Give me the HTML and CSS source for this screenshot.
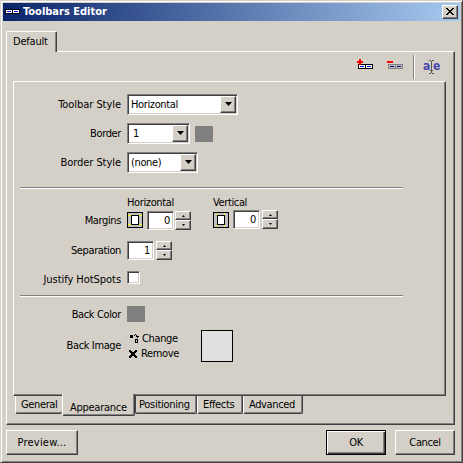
FILE: index.html
```html
<!DOCTYPE html>
<html lang="en">
<head>
<meta charset="utf-8">
<title>Toolbars Editor</title>
<link rel="stylesheet" href="styles.css">
</head>
<body>
<div class="window">
  <header class="titlebar">
    <svg class="app-icon" width="15" height="5" viewBox="0 0 15 5" shape-rendering="crispEdges"><path fill="#000" d="M0 0h15v5H0z"/><path fill="#fff" d="M1 1h6v3H1zM8 1h6v3H8z"/><path fill="#00f" d="M2 2h4v1H2zM9 2h4v1H9z"/></svg>
    <h1>Toolbars Editor</h1>
    <button class="close" aria-label="Close"><svg width="8" height="7" viewBox="0 0 8 7" shape-rendering="crispEdges"><path d="M0 0h2v1H0zM6 0h2v1H6zM1 1h2v1H1zM5 1h2v1H5zM2 2h4v1H2zM3 3h2v1H3zM2 4h4v1H2zM1 5h2v1H1zM5 5h2v1H5zM0 6h2v1H0zM6 6h2v1H6z"/></svg></button>
  </header>
  <nav class="top-tabs"><span class="top-tab">Default</span></nav>
  <main class="page">
    <div class="toolbar">
      <svg width="17" height="12" viewBox="0 0 17 12" shape-rendering="crispEdges"><path fill="#000" d="M2 5h15v5H2z"/><path fill="#fff" d="M3 6h6v3H3zM10 6h6v3h-6z"/><path fill="#00f" d="M4 7h4v1H4zM11 7h4v1h-4z"/><path fill="#f00" d="M3 0h2v2h2v2H5v2H3V4H1V2h2z"/></svg>
      <svg width="17" height="12" viewBox="0 0 17 12" shape-rendering="crispEdges"><path fill="#808080" d="M2 5h15v5H2z"/><path fill="#c0c0c0" d="M3 6h6v3H3zM10 6h6v3h-6z"/><path fill="#000080" d="M4 7h4v1H4zM11 7h4v1h-4z"/><path fill="#f00" d="M1 2h6v2H1z"/></svg>
      <i class="divider"></i>
      <span class="rename"><b>a</b><svg width="5" height="14" viewBox="0 0 5 14" shape-rendering="crispEdges"><path fill="#555" d="M0 0h2v1H0zM3 0h2v1H3zM2 1h1v12H2zM0 13h2v1H0zM3 13h2v1H3zM1 10h3v1H1z"/></svg><b>e</b></span>
    </div>
    <section class="panel">
      <div class="row"><label class="wide-text">Toolbar Style</label><div class="combo combo-wide"><span>Horizontal</span><i class="drop"></i></div></div>
      <div class="row"><label>Border</label><div class="combo combo-narrow"><span>1</span><i class="drop"></i></div><i class="swatch"></i></div>
      <div class="row"><label class="wide-text">Border Style</label><div class="combo combo-mid"><span>(none)</span><i class="drop"></i></div></div>
      <hr>
      <div class="row margins">
        <label>Margins</label>
        <div class="field">
          <span>Horizontal</span>
          <div class="controls">
            <svg width="16" height="16" viewBox="0 0 16 16" shape-rendering="crispEdges"><path d="M0 0h16v16H0z"/><path fill="#c0c0c0" d="M1 1h14v14H1z"/><path fill="#ff0" d="M1 3h14v1H1zM1 12h14v1H1z"/><path d="M4 3h8v10H4z"/><path fill="#fff" d="M5 4h6v8H5z"/></svg>
            <span class="input">0</span><span class="spin"><i class="up"></i><i class="down"></i></span>
          </div>
        </div>
        <div class="field field-vertical">
          <span>Vertical</span>
          <div class="controls">
            <svg width="16" height="16" viewBox="0 0 16 16" shape-rendering="crispEdges"><path d="M0 0h16v16H0z"/><path fill="#c0c0c0" d="M1 1h14v14H1z"/><path fill="#ff0" d="M4 1h1v14H4zM11 1h1v14h-1z"/><path d="M4 3h8v10H4z"/><path fill="#fff" d="M5 4h6v8H5z"/></svg>
            <span class="input">0</span><span class="spin"><i class="up"></i><i class="down"></i></span>
          </div>
        </div>
      </div>
      <div class="row separation"><label>Separation</label><span class="input">1</span><span class="spin"><i class="up"></i><i class="down"></i></span></div>
      <div class="row justify"><label class="wide-text">Justify HotSpots</label><i class="check"></i></div>
      <hr class="second">
      <div class="row back-color"><label>Back Color</label><i class="swatch"></i></div>
      <div class="row back-image">
        <label>Back Image</label>
        <div class="actions">
          <span class="change"><svg width="9" height="9" viewBox="0 0 9 9" shape-rendering="crispEdges"><path d="M0 1h3v3H0zM4 1h1v1H4zM6 1h1v1H6zM5 0h1v1H5zM6 2h3v1H6zM7 3h1v1H7zM5 5h3v1H5zM5 6h1v2H5zM7 6h1v2H7zM5 8h3v1H5z"/></svg>Change</span>
          <span class="remove"><svg width="8" height="8" viewBox="0 0 8 8" shape-rendering="crispEdges"><path d="M0 0h2v1H0zM6 0h2v1H6zM0 1h3v1H0zM5 1h3v1H5zM1 2h6v1H1zM2 3h4v2H2zM1 5h6v1H1zM0 6h3v1H0zM5 6h3v1H5zM0 7h2v1H0zM6 7h2v1H6z"/></svg>Remove</span>
        </div>
        <i class="preview"></i>
      </div>
    </section>
    <nav class="bottom-tabs">
      <span class="tab general">General</span><span class="tab appearance">Appearance</span><span class="tab positioning">Positioning</span><span class="tab effects">Effects</span><span class="tab advanced">Advanced</span>
    </nav>
  </main>
  <footer>
    <button class="btn preview-btn">Preview...</button>
    <button class="btn ok">OK</button>
    <button class="btn">Cancel</button>
  </footer>
</div>
</body>
</html>
```
FILE: styles.css
```css
* { box-sizing: border-box; }
body {
  margin: 0;
  background: #d4d0c8;
  color: #000;
  font: 11px/14px "DejaVu Sans Condensed", "DejaVu Sans", sans-serif;
  font-stretch: condensed;
  letter-spacing: -0.37px;
  white-space: nowrap;
}
svg, i { display: block; flex: none; }
button { font: inherit; letter-spacing: inherit; color: inherit; padding: 0; }

.window {
  width: 463px;
  height: 463px;
  padding: 2px;
  border: 1px solid;
  border-color: #d4d0c8 #404040 #404040 #d4d0c8;
  box-shadow: inset 1px 1px #fff, inset -1px -1px #808080;
}
.titlebar {
  display: flex;
  align-items: center;
  height: 18px;
  padding: 0 2px;
  background: linear-gradient(90deg, #0a246a, #a6caf0);
}
.app-icon { margin-bottom: 1px; }
h1 { flex: 1; margin: 0 0 0 3px; color: #fff; font-size: 11px; line-height: 18px; font-weight: bold; letter-spacing: 0; }
.close, .btn, .drop, .spin i {
  background: #d4d0c8;
  border: 1px solid;
  border-color: #fff #404040 #404040 #fff;
  border-radius: 0;
  box-shadow: inset -1px -1px #808080;
}
.close { display: flex; padding: 2px 0 0 3px; width: 16px; height: 14px; }

.top-tabs { display: flex; height: 30px; padding: 10px 0 0 3px; }
.top-tab {
  position: relative;
  width: 51px;
  height: 21px;
  padding: 3px 0 0 6px;
  background: #d4d0c8;
  border: solid;
  border-width: 1px 1px 0;
  border-color: #fff #404040 #fff #fff;
  border-radius: 2px 2px 0 0;
  box-shadow: inset -1px 0 #808080;
  letter-spacing: -0.2px;
}
.page {
  width: 449px;
  height: 374px;
  margin-left: 3px;
  padding: 0 0 0 6px;
  border: 1px solid;
  border-color: #fff #404040 #404040 #fff;
  box-shadow: inset -1px -1px #808080;
}
.toolbar { display: flex; height: 29px; padding: 3px 0 0 343px; }
.toolbar > svg { margin: 4px 13px 0 0; }
.divider { width: 2px; height: 24px; margin-left: -3px; background: linear-gradient(90deg, #808080 50%, #fff 50%); }
.rename { display: flex; margin: 5px 0 0 8px; color: #4848b0; letter-spacing: 0; font-size: 12px; }
.rename b { width: 7px; line-height: 13px; }
.rename svg { margin: 0 -1px; }

.panel {
  width: 433px;
  height: 315px;
  padding: 8px 0 0 6px;
  border: 1px solid;
  border-color: #fff #404040 #404040 #fff;
  box-shadow: inset -1px -1px #808080;
}
.row { display: flex; align-items: center; height: 29px; }
label { width: 101px; margin-right: 6px; text-align: right; }
.wide-text { letter-spacing: -0.05px; }
.combo {
  display: flex;
  height: 21px;
  padding: 1px;
  background: #fff;
  border: 1px solid;
  border-color: #808080 #fff #fff #808080;
  box-shadow: inset 1px 1px #404040, inset -1px -1px #d4d0c8;
}
.combo span { flex: 1; padding: 2px 0 0 2px; }
.combo-wide { width: 111px; }
.combo-narrow { width: 63px; }
.combo-narrow span { padding-left: 4px; }
.combo-mid { width: 71px; }
.drop { width: 16px; height: 17px; padding: 5px 0 0 4px; }
.drop::before { content: ""; display: block; width: 7px; height: 4px; background: #000; clip-path: polygon(0 0, 100% 0, 50% 100%); }
.swatch { width: 18px; height: 16px; background: #808080; }
.combo + .swatch { margin-left: 5px; }
hr { width: 383px; height: 2px; margin: 10px 0 0; border: 0; background: linear-gradient(#808080 50%, #fff 50%); }

.margins { height: 41px; padding-top: 7px; align-items: flex-start; }
.margins > label { padding-top: 18px; }
.field { width: 86px; }
.field > span { display: block; height: 15px; }
.controls { display: flex; }
.controls > svg { margin-top: 1px; }
.controls .input { margin-left: 4px; }
.field-vertical .input, .field-vertical .spin { margin-top: -1px; }
.field-vertical .spin { margin-left: 2px; }
.input {
  width: 27px;
  height: 19px;
  padding: 2px 3px 0 0;
  text-align: right;
  background: #fff;
  border: 1px solid;
  border-color: #808080 #fff #fff #808080;
  box-shadow: inset 1px 1px #404040, inset -1px -1px #d4d0c8;
}
.spin { width: 16px; height: 19px; margin-left: 1px; }
.spin i { height: 9px; padding: 3px 0 0 6px; }
.spin .down { height: 10px; }
.spin i::before { content: ""; display: block; width: 3px; height: 2px; background: #000; clip-path: polygon(50% 0, 100% 100%, 0 100%); }
.spin .down::before { clip-path: polygon(0 0, 100% 0, 50% 100%); }
.separation { height: 41px; }
.separation .spin { margin-left: 2px; }
.justify { height: 13px; }
.justify label { padding-top: 4px; }
.check {
  width: 13px;
  height: 13px;
  background: #fff;
  border: 1px solid;
  border-color: #808080 #fff #fff #808080;
  box-shadow: inset 1px 1px #404040, inset -1px -1px #d4d0c8;
}
hr.second { margin-top: 11px; }
.back-color { height: 16px; margin-top: 9px; }
.back-color label { padding-top: 1px; }
.back-image { height: 32px; margin-top: 8px; }
.actions { width: 74px; height: 30px; }
.actions span { display: flex; align-items: center; gap: 3px; height: 15px; }
.change { padding-left: 3px; }
.remove { padding-left: 2px; }
.actions .remove { gap: 4px; }
.preview { width: 32px; height: 32px; background: #e0e0e0; border: 1px solid #000; }

.bottom-tabs { display: flex; align-items: flex-start; padding-left: 2px; }
.tab {
  height: 18px;
  padding: 2px 0 0 5px;
  border: solid;
  border-width: 0 1px 1px;
  border-color: #fff #404040 #404040 #fff;
  border-radius: 0 0 2px 2px;
  box-shadow: inset -1px -1px #808080;
}
.general { width: 47px; border-right: 0; box-shadow: inset 0 -1px #808080; }
.appearance { position: relative; width: 73px; height: 22px; margin-top: -2px; padding: 7px 0 0 7px; background: #d4d0c8; letter-spacing: -0.27px; }
.positioning { width: 62px; padding-left: 3px; border-left-color: #404040; letter-spacing: -0.27px; }
.effects { width: 46px; }
.advanced { width: 60px; }

footer { display: flex; margin: 5px 3px 0; }
.btn { width: 60px; height: 25px; text-align: center; }
.preview-btn { width: 72px; margin-right: 248px; letter-spacing: 0.2px; }
.ok { margin-right: 9px; border-color: #000; box-shadow: inset 1px 1px #fff, inset -1px -1px #404040, inset -2px -2px #808080; }
```
